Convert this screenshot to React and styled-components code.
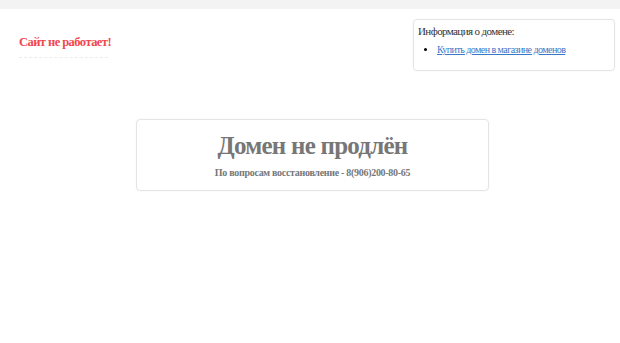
import React from "react";
import styled, { createGlobalStyle } from "styled-components";

const GlobalStyle = createGlobalStyle`
  html, body {
    margin: 0;
    padding: 0;
    background: #fff;
    font-family: "Liberation Serif", "Times New Roman", serif;
  }
`;

const Page = styled.div`
  width: 620px;
  height: 343px;
  overflow: hidden;
`;

const TopBar = styled.div`
  height: 9px;
  background: #f3f3f3;
`;

const Header = styled.div`
  display: flex;
  justify-content: space-between;
  align-items: flex-start;
  padding: 10px 5px 0 19px;
`;

const Notice = styled.div`
  padding-top: 15px;
`;

const NoticeTitle = styled.h2`
  margin: 0;
  font-size: 12.5px;
  font-weight: bold;
  line-height: 16px;
  letter-spacing: -0.55px;
  color: #f2464e;
`;

const Rule = styled.div`
  width: 89px;
  margin-top: 7px;
  border-top: 1px dashed #ececec;
`;

const InfoBox = styled.div`
  width: 192px;
  height: 42px;
  padding: 4px;
  border: 1px solid #e4e4e4;
  border-radius: 4px;
  box-shadow: 0 0 2px rgba(0, 0, 0, 0.05);
`;

const InfoTitle = styled.div`
  font-size: 11px;
  line-height: 14px;
  letter-spacing: -0.6px;
  color: #333;
`;

const LinkList = styled.ul`
  margin: 5px 0 0;
  padding-left: 19px;
  font-size: 10px;
  line-height: 14px;
  letter-spacing: -0.55px;
`;

const ShopLink = styled.a`
  color: #3a78c8;
  text-decoration: underline;
`;

const Main = styled.div`
  display: flex;
  justify-content: center;
  padding: 48px 0 0 5px;
`;

const Card = styled.div`
  width: 351px;
  height: 70px;
  border: 1px solid #e4e4e4;
  border-radius: 4px;
  box-shadow: 0 0 2px rgba(0, 0, 0, 0.05);
  text-align: center;
  color: #777;
`;

const CardTitle = styled.h1`
  margin: 12px 0 0;
  font-size: 25px;
  line-height: 28px;
  font-weight: bold;
  letter-spacing: -0.75px;
`;

const CardText = styled.p`
  margin: 7px 0 0;
  font-size: 10px;
  line-height: 12px;
  font-weight: bold;
  letter-spacing: -0.3px;
`;

export default function App() {
  return (
    <Page>
      <GlobalStyle />
      <TopBar />
      <Header>
        <Notice>
          <NoticeTitle>Сайт не работает!</NoticeTitle>
          <Rule />
        </Notice>
        <InfoBox>
          <InfoTitle>Информация о домене:</InfoTitle>
          <LinkList>
            <li>
              <ShopLink href="#">Купить домен в магазине доменов</ShopLink>
            </li>
          </LinkList>
        </InfoBox>
      </Header>
      <Main>
        <Card>
          <CardTitle>Домен не продлён</CardTitle>
          <CardText>По вопросам восстановление - 8(906)200-80-65</CardText>
        </Card>
      </Main>
    </Page>
  );
}
